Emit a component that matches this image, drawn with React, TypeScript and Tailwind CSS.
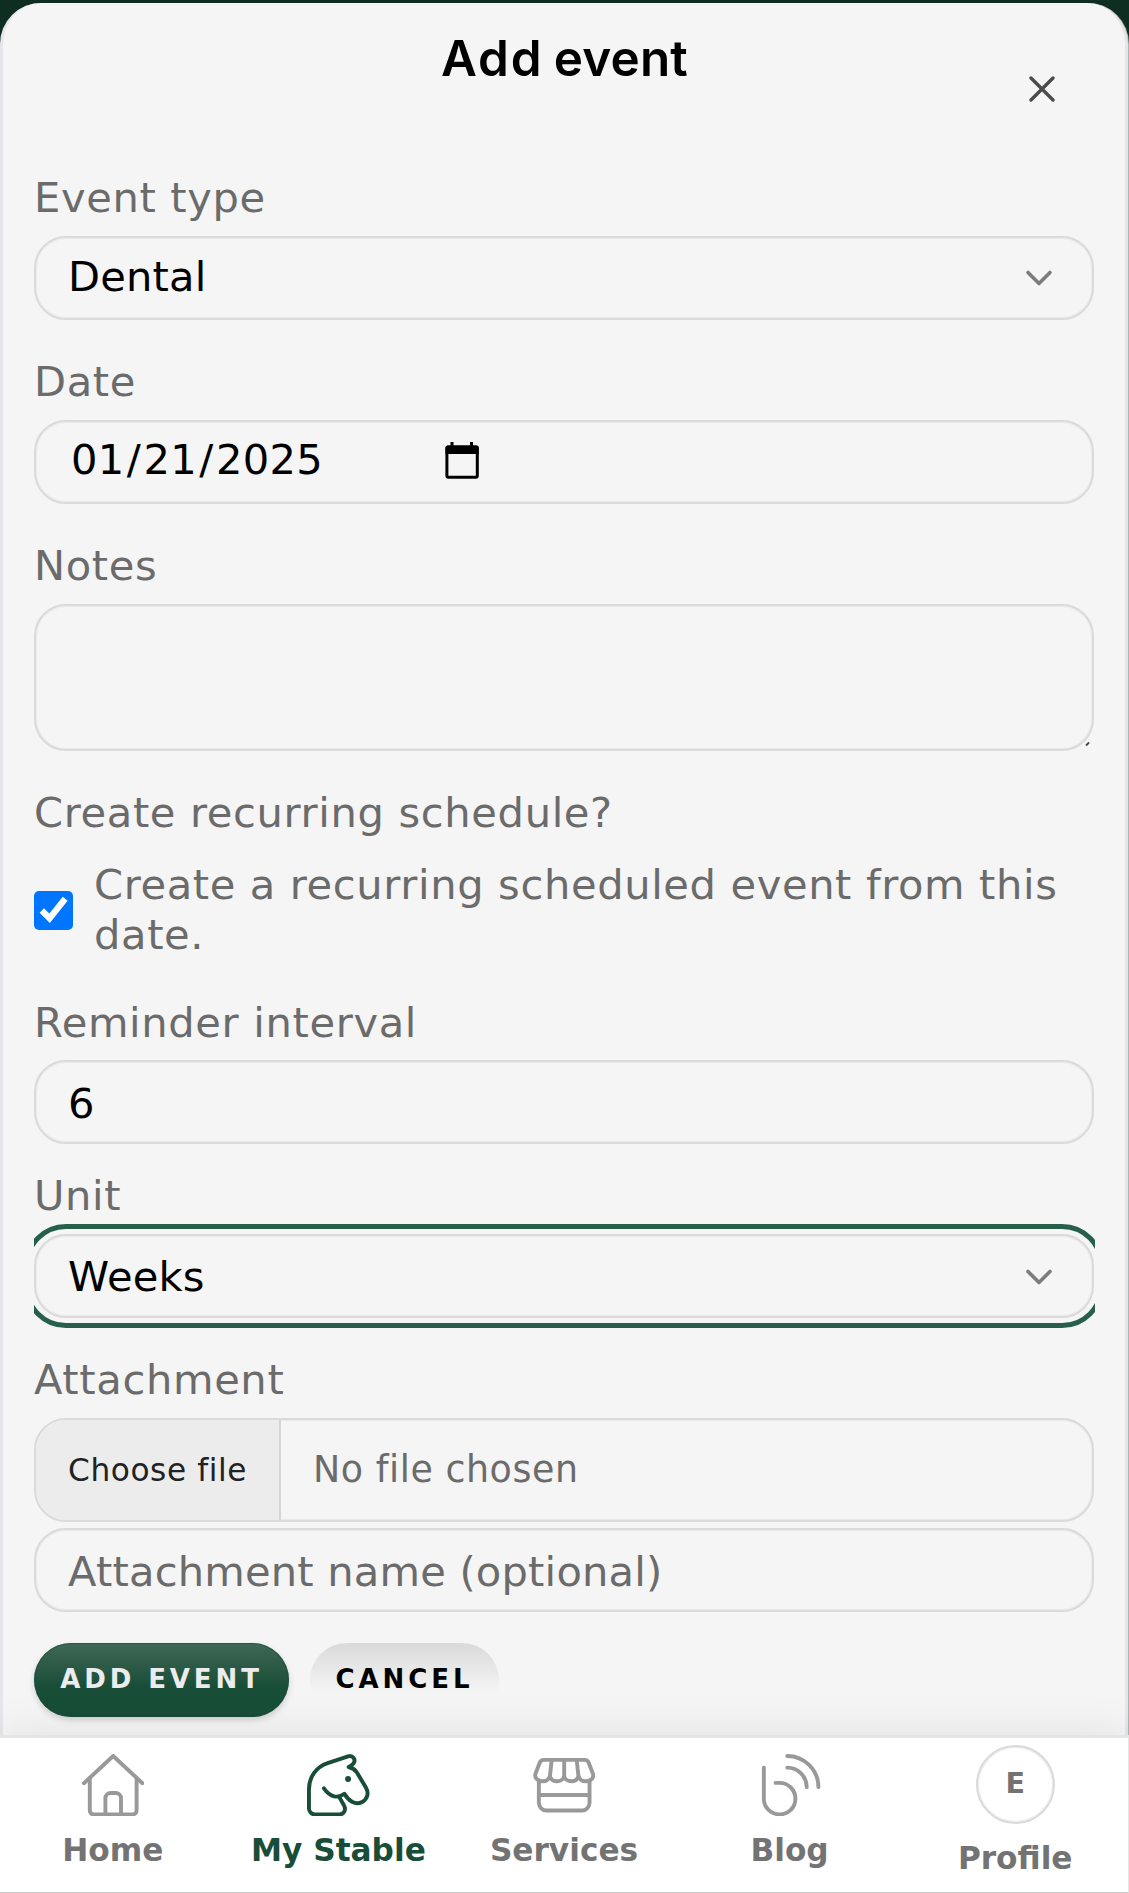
import type { ReactNode } from "react";

const border = "border-2 border-[#dadada] shadow-[inset_0_0_0_1px_#eaeaea]";
const fieldBox = `flex w-full items-center rounded-[32px] pl-8 pr-[38px] text-[41.6px] tracking-[0.2px] text-black ${border}`;

function Label({ className = "", children }: { className?: string; children: ReactNode }) {
  return (
    <div className={`h-[50px] pt-px text-[41.6px] leading-[50px] tracking-[0.65px] text-[#6b6b6b] ${className}`}>
      {children}
    </div>
  );
}

function ChevronDown() {
  return (
    <svg
      className="ml-auto"
      width="32"
      height="32"
      viewBox="0 0 32 32"
      fill="none"
      stroke="#7c7c7c"
      strokeWidth="3.6"
      strokeLinecap="round"
      strokeLinejoin="round"
    >
      <path d="M6 11.5l11 11 11-11" />
    </svg>
  );
}

function CalendarIcon() {
  return (
    <svg width="34" height="37" viewBox="0 0 34 37" fill="none">
      <path d="M7 0v5M26.5 0v5" stroke="#000" strokeWidth="3" />
      <rect x="1.9" y="5" width="30.4" height="30.2" rx="1.5" stroke="#000" strokeWidth="3" />
      <path d="M2.5 3.5h29.2a2 2 0 0 1 2 2V12H.5V5.5a2 2 0 0 1 2-2z" fill="#000" />
    </svg>
  );
}

const iconProps = {
  className: "size-[62.4px]",
  viewBox: "0 0 24 24",
  fill: "none",
  stroke: "currentColor",
  strokeWidth: 1.5,
  strokeLinecap: "round",
  strokeLinejoin: "round",
} as const;

function HomeIcon() {
  return (
    <svg {...iconProps}>
      <path d="M.75 11.25L12 .75l11.25 10.5" />
      <path d="M3 9.3v12.45a1.5 1.5 0 0 0 1.5 1.5h15a1.5 1.5 0 0 0 1.5-1.5V9.3" />
      <path d="M9 23.25V17a2 2 0 0 1 2-2h2a2 2 0 0 1 2 2v6.25" />
    </svg>
  );
}

function HorseIcon() {
  return (
    <svg {...iconProps}>
      <path d="M12.3 16.4l1.9 3.3c1 1.8 0 3.55-1.8 3.55H3a2.25 2.25 0 0 1-2.25-2.25v-7.3c0-4.9 2.7-8.7 7.2-10.2l7.85-2.6c1.9-.5 3.1 1.3 2.1 2.7-.4.6-1 1-1.9 1.4 1.6.4 2.4.9 3.2 2.1l3.4 5.7c1.5 2.5.4 5-1.7 5.8-2.4 1-4.9-.5-6.5-3.3-2.5 1.9-5.4 1.4-7.9-2.1" />
      <circle cx="15.8" cy="9.6" r="1.15" fill="currentColor" stroke="none" />
    </svg>
  );
}

function StoreIcon() {
  return (
    <svg {...iconProps}>
      <path d="M4.2 2.25h15.6a1.8 1.8 0 0 1 1.7 1.3l1.6 4.2c.4 1.4-.9 2.75-2.7 2.75a3 3 0 0 1-2.9-1.9c-.4 1.2-1.5 1.9-2.75 1.9S12.3 9.8 12 8.6c-.3 1.2-1.5 1.9-2.75 1.9S6.9 9.8 6.5 8.6a3 3 0 0 1-2.9 1.9C1.8 10.5.6 9.15.9 7.75l1.6-4.2a1.8 1.8 0 0 1 1.7-1.3z" />
      <path d="M7.2 2.25l-.7 6.35M12 2.25V8.6M16.8 2.25l.7 6.35" />
      <path d="M2.25 10.2v8.55a3 3 0 0 0 3 3h13.5a3 3 0 0 0 3-3V10.2M2.25 15.75h19.5" />
    </svg>
  );
}

function BlogIcon() {
  return (
    <svg {...iconProps}>
      <path d="M2.25 5.25v11.93a6.07 6.07 0 1 0 6.07-6.07H6.75" />
      <path d="M11.25 5.25a7.5 7.5 0 0 1 7.5 7.5M11.25.75a12 12 0 0 1 12 12" />
    </svg>
  );
}

// Bottom tabs.
const tabs = [
  { title: "Home", icon: HomeIcon, active: false },
  { title: "My Stable", icon: HorseIcon, active: true },
  { title: "Services", icon: StoreIcon, active: false },
  { title: "Blog", icon: BlogIcon, active: false },
];

export default function App() {
  return (
    <div className="flex h-[1893px] w-[1129px] flex-col bg-[#0f2e22] pt-[3px] font-['DejaVu_Sans',sans-serif]">
      <main className="mr-px flex h-[1732px] flex-col rounded-t-[41px] border-x-[3px] border-[#e5e5ea] bg-[#f5f5f5] px-[31px] shadow-[1px_0_0_#a9b8b6]">
        <header className="relative h-[169px] pt-[27px] pl-px text-center font-['Inter',sans-serif] text-[49.4px] leading-[56px] font-semibold text-black [word-spacing:-2px]">
          <span className="tracking-[1.8px]">Add</span> <span className="tracking-[0.2px]">event</span>
          <svg
            className="absolute top-[73px] right-[39px]"
            width="26"
            height="26"
            viewBox="0 0 26 26"
            stroke="#4b4b4b"
            strokeWidth="3.4"
            strokeLinecap="round"
          >
            <path d="M2 2l22 22M24 2L2 24" />
          </svg>
        </header>

        <Label>Event type</Label>
        <div className={`${fieldBox} mt-[14px] h-[84px] pb-[2px]`}>
          Dental
          <ChevronDown />
        </div>

        <Label className="mt-[36px]">Date</Label>
        <div className={`${fieldBox} mt-[14px] h-[84px] pb-[3px]`}>
          <span className="w-[377px] pl-[3px] tracking-[0.3px]">
            01<span className="px-[2.3px]">/</span>21<span className="px-[2.3px]">/</span>2025
          </span>
          <CalendarIcon />
        </div>

        <Label className="mt-[36px]">Notes</Label>
        <div className={`${fieldBox} relative mt-[14px] h-[147px]`}>
          <svg className="absolute -right-px bottom-0" width="9" height="9" viewBox="0 0 9 9">
            <path d="M2 5.5l3-3" stroke="#444" strokeWidth="1.8" />
            <path d="M4.5 7l2-2" stroke="#fff" strokeWidth="1.5" />
          </svg>
        </div>

        <Label className="mt-[36px]">Create recurring schedule?</Label>
        <div className="mt-[23px] flex items-center gap-[21px]">
          <span className="flex size-[39px] shrink-0 overflow-hidden rounded-[5px]">
            <input type="checkbox" defaultChecked className="size-[39px]" />
          </span>
          <span className="text-[41.6px] leading-[50px] tracking-[0.63px] text-[#6b6b6b]">
            Create a recurring scheduled event from this date.
          </span>
        </div>

        <Label className="mt-[37px]">Reminder interval</Label>
        <div className={`${fieldBox} mt-[13px] h-[84px] pt-[5px]`}>6</div>

        <Label className="mt-[26px]">Unit</Label>
        <div className="mt-[3px] -mr-px overflow-hidden py-[11px] pr-px">
          <div className={`${fieldBox} h-[84px] outline-[5px] outline-offset-[5px] outline-[#275f4a]`}>
            <span className="pt-[3px]">Weeks</span>
            <ChevronDown />
          </div>
        </div>

        <Label className="mt-[25px]">Attachment</Label>
        <div
          className={`mt-[14px] flex h-[104px] shrink-0 items-center overflow-hidden rounded-[32px] text-[36.4px] tracking-[0.55px] text-[#6b6b6b] ${border}`}
        >
          <span className="flex h-full w-[245px] items-center border-r-2 border-[#d4d4d4] bg-[#ececec] pl-8 text-[31.2px] tracking-[0.6px] text-[#222]">
            Choose file
          </span>
          <span className="pl-8">No file chosen</span>
        </div>
        <div className={`${fieldBox} mt-[6px] h-[84px] pt-[4px]`}>
          <span className="text-[#6b6b6b]">Attachment name (optional)</span>
        </div>

        <div className="mt-[31px] flex gap-[21px] text-[26px] font-bold tracking-[3.9px]">
          <button className="h-[74px] w-[255px] rounded-full bg-linear-to-b from-[#3f6857] to-[#184d37] to-60% pb-[2px] text-[#ececec] shadow-[0_3px_6px_rgba(0,0,0,0.16),inset_0_0_0_1px_rgba(24,77,55,0.6)]">
            ADD EVENT
          </button>
          <button className="h-[74px] w-[189px] rounded-full bg-linear-to-b from-[#dadada] to-[#f5f5f5] to-68% pb-[2px] text-black">
            CANCEL
          </button>
        </div>
      </main>

      <nav className="relative grid h-[158px] grid-cols-5 border-t-[3px] border-r border-b border-t-[#e5e5e5] border-r-[#e3e6e5] border-b-[#c8cccb] bg-white text-[31.2px] font-bold text-[#737373] shadow-[0_-3px_40px_rgba(0,0,0,0.08)]">
        {tabs.map((tab) => (
          <div
            key={tab.title}
            className={`flex flex-col items-center gap-[11px] pt-[16px] ${tab.active ? "text-[#184d37]" : ""}`}
          >
            <span className={tab.active ? "" : "text-[#999]"}>
              <tab.icon />
            </span>
            {tab.title}
          </div>
        ))}
        <div className="flex flex-col items-center gap-[11px] pt-[7px]">
          <span className={`flex size-[79px] items-center justify-center rounded-full pb-[2px] text-[28.6px] ${border}`}>
            E
          </span>
          Profile
        </div>
      </nav>
    </div>
  );
}
